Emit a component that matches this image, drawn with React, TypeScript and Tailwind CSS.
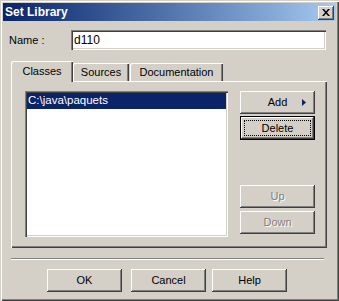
import type { ReactNode } from "react";

const raised =
  "shadow-[inset_-1px_-1px_#404040,inset_1px_1px_#ffffff,inset_-2px_-2px_#808080]";
const sunken =
  "shadow-[inset_1px_1px_#808080,inset_2px_2px_#404040,inset_-1px_-1px_#ffffff,inset_-2px_-2px_#d4d0c8]";

function Btn({ children, disabled, className = "" }: { children: ReactNode; disabled?: boolean; className?: string }) {
  return (
    <button
      className={`w-[75px] h-[23px] flex items-center justify-center bg-[#d4d0c8] ${raised} ${
        disabled ? "text-[#808080] [text-shadow:1px_1px_0_#ffffff]" : "text-black"
      } ${className}`}
    >
      {children}
    </button>
  );
}

export default function App() {
  return (
    <div className="w-[339px] h-[301px] bg-[#d4d0c8] flex flex-col font-['Liberation_Sans',Arial,sans-serif] text-[11px] leading-none text-black shadow-[inset_1px_1px_#d4d0c8,inset_2px_2px_#ffffff,inset_-1px_-1px_#404040,inset_-2px_-2px_#808080]">
      {/* title bar */}
      <div className="mx-[3px] mt-[3px] h-[18px] flex items-center bg-linear-to-r from-[#0a246a] to-[#a6caf0] pl-[2px] pr-[2px]">
        <span className="font-bold text-white text-[12px]">Set Library</span>
        <div className={`ml-auto mt-[1px] w-[16px] h-[14px] flex items-center justify-center bg-[#d4d0c8] ${raised}`}>
          <svg width="8" height="7" viewBox="0 0 8 7">
            <path d="M0 0h2l2 2.5L6 0h2L5 3.5 8 7H6L4 4.5 2 7H0l3-3.5z" fill="#000" />
          </svg>
        </div>
      </div>

      {/* name row */}
      <div className="mt-[9px] h-[20px] flex items-center">
        <span className="w-[71px] pl-[9px]">Name :</span>
        <div className={`w-[255px] h-[20px] bg-white flex items-center pl-[3px] text-[12px] ${sunken}`}>d110</div>
      </div>

      {/* tabs */}
      <div className="mt-[11px] ml-[11px] h-[20px] flex items-end">
        <div className="relative z-10 mb-[-1px] w-[62px] h-[21px] flex items-center justify-center bg-[#d4d0c8] rounded-tl-[2px] shadow-[inset_1px_1px_#ffffff,inset_-1px_0_#404040,inset_-2px_0_#808080]">
          Classes
        </div>
        <div className="w-[56px] h-[18px] flex items-center justify-center pt-[1px] bg-[#d4d0c8] rounded-tl-[2px] shadow-[inset_1px_1px_#ffffff,inset_-1px_0_#404040,inset_-2px_0_#808080]">
          Sources
        </div>
        <div className="ml-[1px] w-[93px] h-[18px] flex items-center justify-center pt-[1px] bg-[#d4d0c8] rounded-tl-[2px] shadow-[inset_1px_1px_#ffffff,inset_-1px_0_#404040,inset_-2px_0_#808080]">
          Documentation
        </div>
      </div>

      {/* tab panel */}
      <div className="ml-[11px] w-[316px] h-[167px] flex pt-[10px] pl-[14px] shadow-[inset_1px_1px_#ffffff,inset_-1px_-1px_#404040,inset_-2px_-2px_#808080]">
        <div className={`w-[203px] h-[146px] bg-white p-[2px] ${sunken}`}>
          <div className="h-[16px] bg-[#0a246a] text-white flex items-center pl-[1px] text-[11.5px]">C:\java\paquets</div>
        </div>
        <div className="ml-[12px] flex flex-col">
          <Btn className="relative">
            <span>Add</span>
            <svg className="absolute right-[9px] top-[8px]" width="4" height="7" viewBox="0 0 4 7">
              <path d="M0 0L4 3.5L0 7z" fill="#0a246a" />
            </svg>
          </Btn>
          <div className="mt-[2px] w-[75px] h-[24px] border border-black flex">
            <div className={`flex-1 flex p-[3px] ${raised}`}>
              <div className="flex-1 border border-dotted border-black flex items-center justify-center">Delete</div>
            </div>
          </div>
          <Btn disabled className="mt-[45px]">Up</Btn>
          <Btn disabled className="mt-[3px]">Down</Btn>
        </div>
      </div>

      {/* separator */}
      <div className="mt-[10px] ml-[11px] w-[313px] h-[2px] border-t border-t-[#808080] border-b border-b-white" />

      {/* bottom buttons */}
      <div className="mt-[9px] ml-[47px] flex">
        <Btn>OK</Btn>
        <Btn className="ml-[9px]">Cancel</Btn>
        <Btn className="ml-[6px]">Help</Btn>
      </div>
    </div>
  );
}
